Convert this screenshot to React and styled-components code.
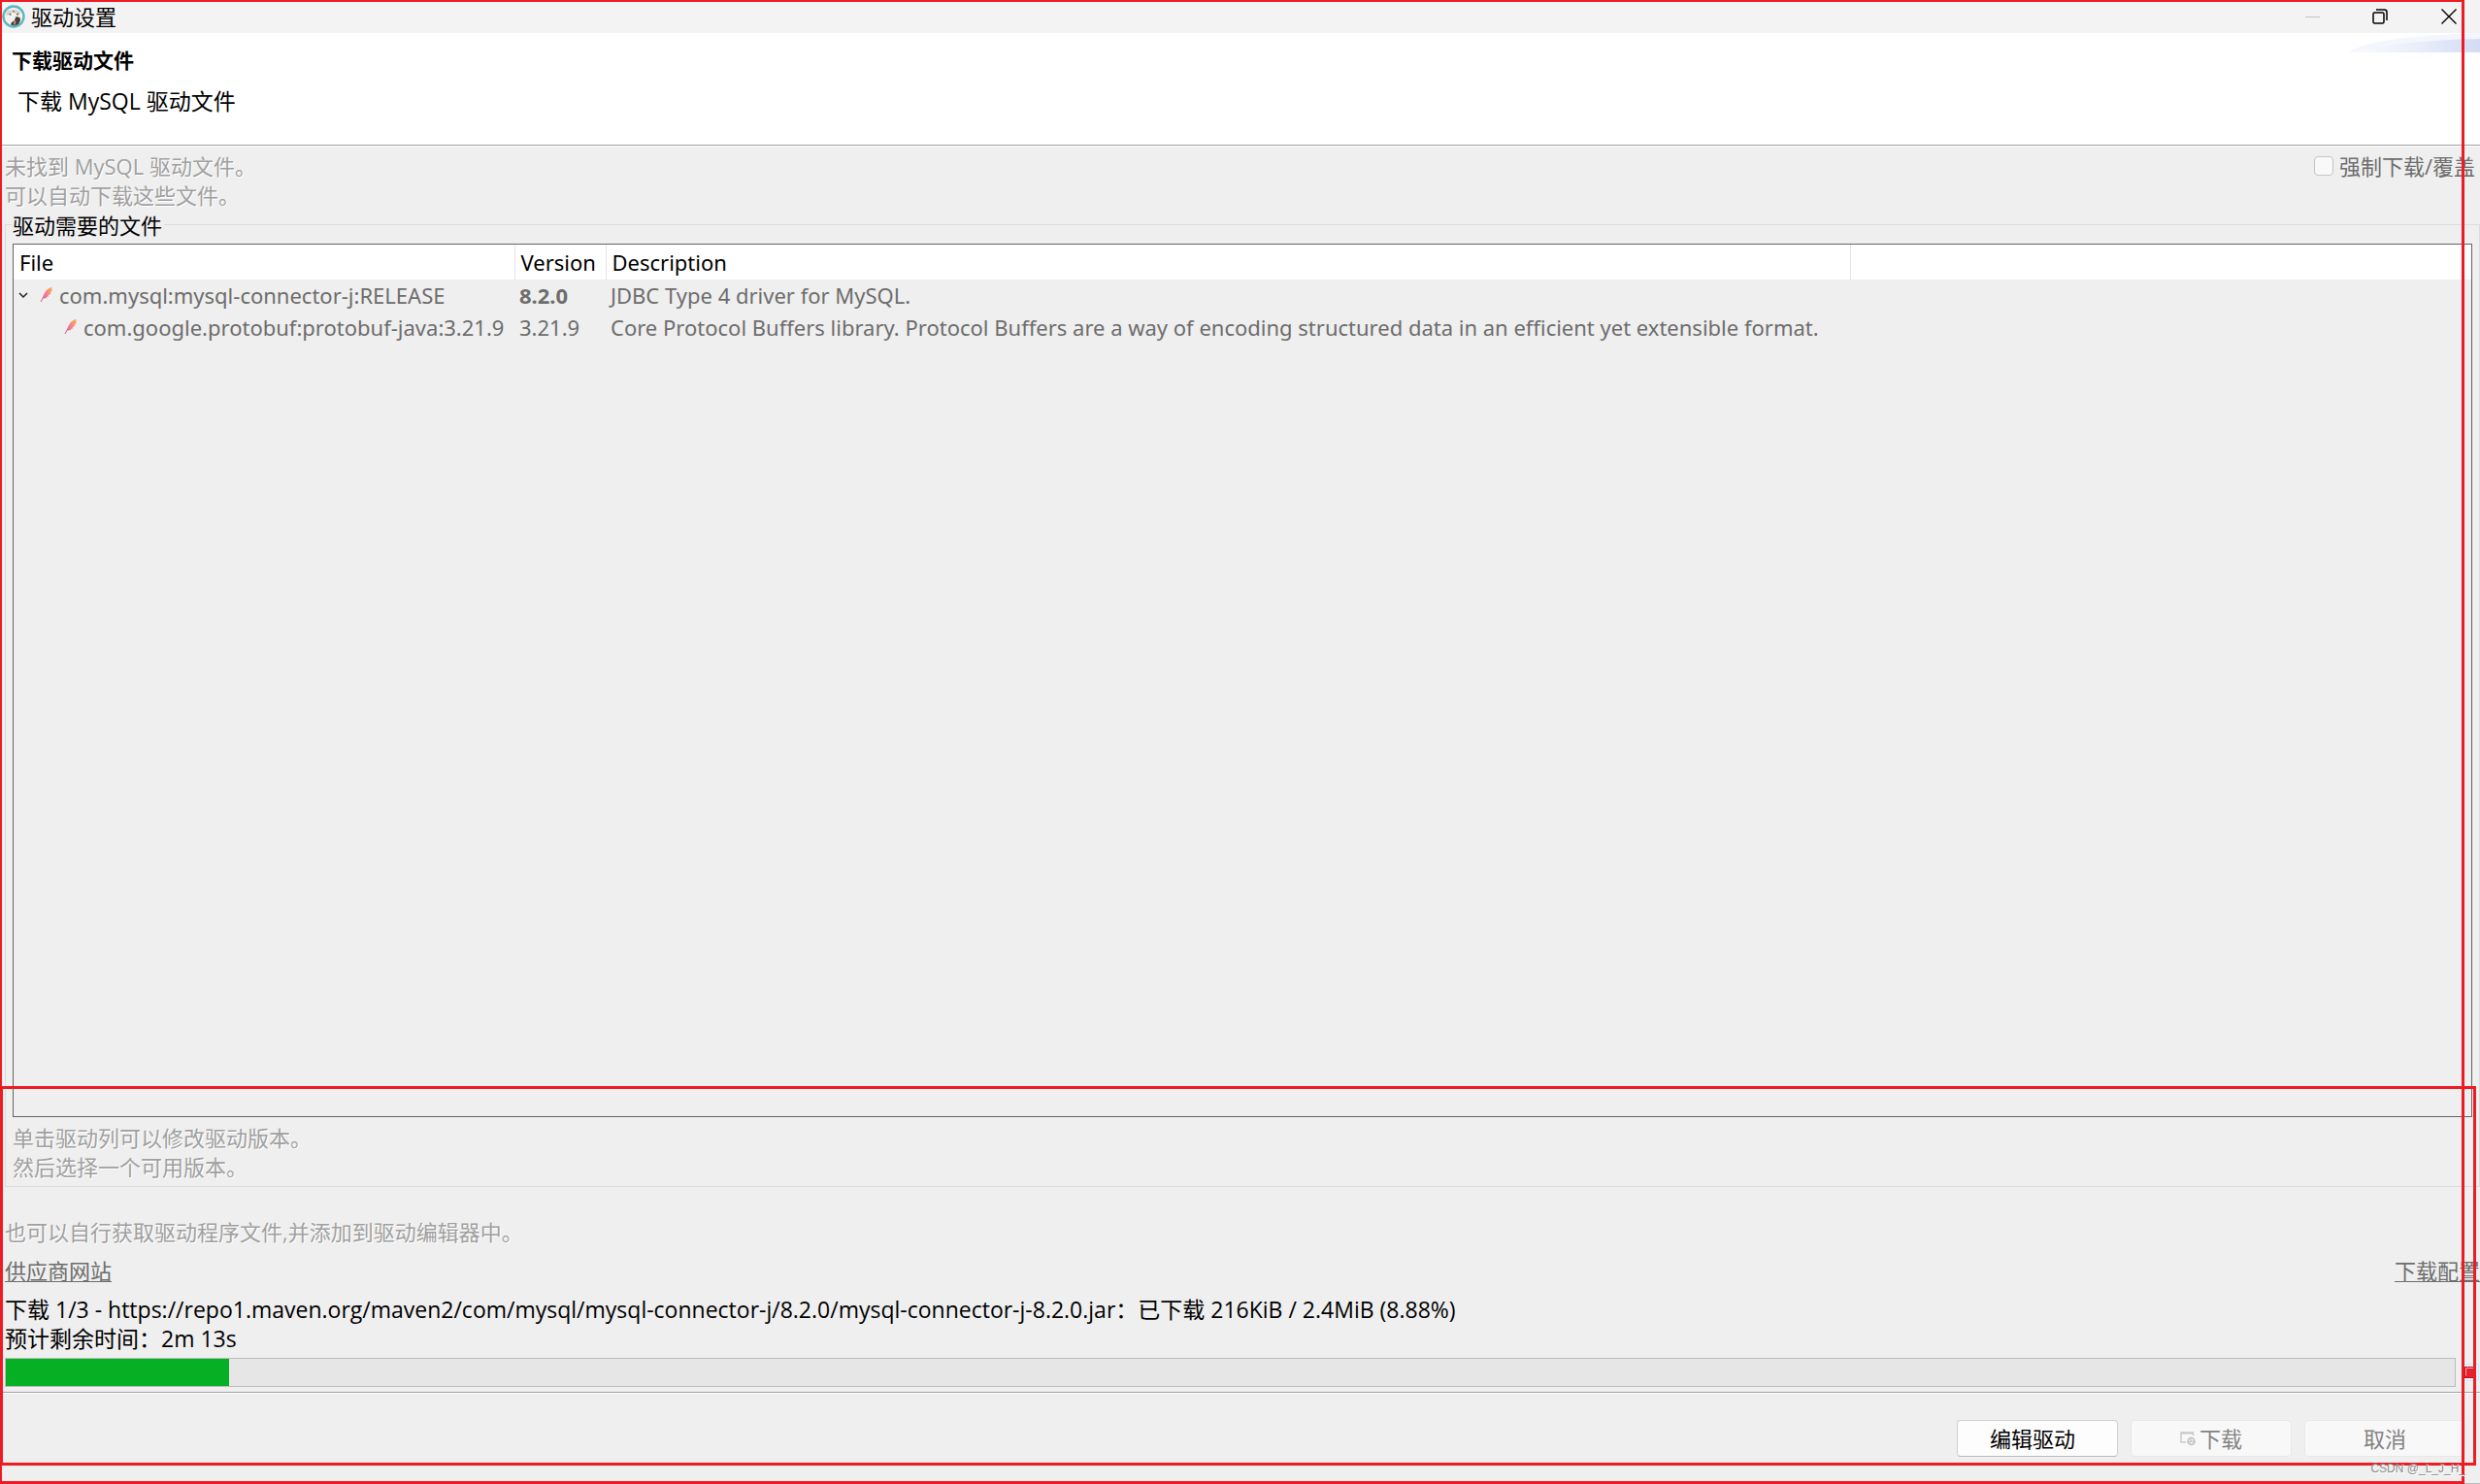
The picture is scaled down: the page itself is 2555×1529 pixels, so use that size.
import React from "react"
import styled, { createGlobalStyle } from "styled-components"

const GlobalStyle = createGlobalStyle`
  * {
    box-sizing: border-box;
  }
  body {
    margin: 0;
    background: #efefef;
    color: #000;
    font-family: "Open Sans", "Noto Sans CJK SC", sans-serif;
    font-size: 22px;
    line-height: 30px;
  }
  button, input {
    font: inherit;
  }
`

const Window = styled.div`
  position: relative;
  display: flex;
  flex-direction: column;
  min-height: 100vh;
  overflow: hidden;
`

const TitleBar = styled.header`
  display: flex;
  align-items: center;
  height: 34px;
  padding-left: 2px;
  background: #f3f3f3;
  h1 {
    margin: 0 0 0 6px;
    font-size: 22px;
    font-weight: 400;
  }
`

const WindowButtons = styled.div`
  display: flex;
  margin-left: auto;
`

const WindowButton = styled.button`
  display: flex;
  align-items: center;
  justify-content: center;
  width: 70px;
  height: 34px;
  padding: 0;
  border: 0;
  background: none;
  color: #000;
  &:disabled {
    color: #c4c4c4;
  }
  &:last-child {
    width: 68px;
    padding-left: 4px;
  }
`

const Banner = styled.section`
  display: flex;
  justify-content: space-between;
  height: 117px;
  background: #fff;
  box-shadow: inset 0 -1px #fff, inset 0 -2px #a0a0a0;
  h2 {
    margin: 13px 0 0 12px;
    font-size: 21px;
    font-weight: 700;
  }
  p {
    margin: 12px 0 0 18px;
    font-size: 23px;
  }
`

const Content = styled.main`
  display: flex;
  flex: 1;
  flex-direction: column;
  padding: 5px 0 5px 5px;
`

const Row = styled.div`
  display: flex;
  justify-content: space-between;
  align-items: flex-start;
`

const Note = styled.p`
  margin: 0;
  color: #a0a0a0;
  text-shadow: 1px 1px #fff;
`

const CheckLabel = styled.label`
  display: flex;
  align-items: center;
  gap: 6px;
  padding-right: 5px;
  color: #6d6d6d;
  input {
    appearance: none;
    width: 20px;
    height: 20px;
    margin: 0;
    border: 1px solid #c4c4c4;
    border-radius: 4px;
    background: #f9f9f9;
  }
`

const Group = styled.section`
  display: flex;
  flex: 1;
  flex-direction: column;
  margin-top: 15px;
  padding: 0 7px 5px;
  border: 1px solid #dcdcdc;
  h3 {
    align-self: flex-start;
    margin: -15px 0 4px -1px;
    padding: 0 2px 0 1px;
    background: #efefef;
    font-size: 22px;
    font-weight: 400;
  }
`

const TableBox = styled.div`
  flex: 1;
  margin-bottom: 6px;
  border: 1px solid #646464;
`

const Table = styled.table`
  width: 100%;
  table-layout: fixed;
  border-collapse: collapse;
  font-family: "Noto Sans", sans-serif;
  white-space: nowrap;
  th,
  td {
    padding: 0 6px;
    text-align: left;
    font-weight: 400;
  }
  th {
    height: 36px;
    background: #fff;
    border-right: 1px solid #e5e5e5;
  }
  th:last-child {
    border-right: 0;
  }
  td {
    height: 33px;
    padding: 0 5px 2px;
    color: #6d6d6d;
  }
`

const FileCell = styled.div`
  display: flex;
  align-items: center;
  gap: 5px;
  padding-left: ${props => (props.$child ? 46 : 0)}px;
  svg {
    flex: none;
  }
`

const VersionText = styled.span`
  font-weight: ${props => (props.$bold ? 700 : 400)};
`

const ManualNote = styled(Note)`
  margin: 31px 0 10px;
`

const TextLink = styled.a`
  color: #6d6d6d;
  text-decoration: underline;
  text-decoration-thickness: 1px;
  text-underline-offset: 2px;
`

const Status = styled.p`
  margin: 10px 0 5px;
  font-size: 23px;
`

const ProgressRow = styled.div`
  display: flex;
  align-items: center;
  gap: 6px;
`

const Progress = styled.progress`
  appearance: none;
  flex: 1;
  height: 30px;
  border: 1px solid #bcbcbc;
  background: #e6e6e6;
  &::-webkit-progress-bar {
    background: #e6e6e6;
  }
  &::-webkit-progress-value {
    background: #06b025;
  }
`

const StopButton = styled.button`
  display: flex;
  align-items: center;
  justify-content: center;
  width: 18px;
  height: 18px;
  margin-right: 1px;
  padding: 0;
  border: 1px solid #cce8ff;
  background: #e5f3ff;
`

const Footer = styled.footer`
  display: flex;
  justify-content: flex-end;
  gap: 13px;
  padding: 28px 15px 27px 0;
  border-top: 1px solid #a0a0a0;
  border-bottom: 1px solid #bcbcbc;
  box-shadow: inset 0 1px #fff;
`

const Button = styled.button`
  display: flex;
  align-items: center;
  justify-content: center;
  gap: 4px;
  width: 166px;
  height: 38px;
  padding: 0 10px 0 0;
  border: 1px solid #d0d0d0;
  border-bottom-color: #bababa;
  border-radius: 4px;
  background: #fdfdfd;
  color: #000;
  &:disabled {
    padding: 0;
    border-color: #e8e8e8;
    background: #f8f8f8;
    color: #838383;
  }
`

// red marker frames drawn over the window
const Marker = styled.div`
  position: absolute;
  pointer-events: none;
  border: 3px solid #ed1c24;
`

const WindowMarker = styled(Marker)`
  inset: 0 16px 0 0;
  border-top-width: 2px;
  border-left-width: 2px;
`

const ProgressMarker = styled(Marker)`
  right: 4px;
  bottom: 19px;
  left: 0;
  height: 391px;
`

const Watermark = styled.span`
  position: absolute;
  right: 15px;
  bottom: 6px;
  color: #8c8c8c;
  font-family: "Liberation Sans", sans-serif;
  font-size: 12px;
  line-height: 20px;
  text-shadow: 1px 1px #fff;
`

const BeaverIcon = () => (
  <svg width="24" height="24" viewBox="0 0 24 24">
    <circle cx="12" cy="12" r="10.5" fill="#f4f1ee" stroke="#57b9c0" strokeWidth="2.4" />
    <path d="M4 9c1-3 4-4 6-3.5l2-1 3 1 3 1 1 2-1 2-3-1-3-2-4 1-3 3z" fill="#d8d2cd" />
    <path d="M7 9.5l2-1 1 1.5-2 1zM11 6.5l2-.5v1.5h-2zM15 9l2-.5v2l-2 .3z" fill="#80746c" />
    <path d="M14.5 12l4 1 .5 3-2 4-4 1.5-4-1 1-2.5 2.5-1.5 1-2z" fill="#4a3a35" />
    <path d="M12.5 16l2 .5-.5 4h-2z" fill="#a8978d" />
  </svg>
)

const FeatherIcon = () => (
  <svg width="16" height="20" viewBox="0 0 16 20">
    <defs>
      <linearGradient id="feather" x1="1" y1="0" x2="0" y2="1">
        <stop offset="0" stopColor="#f9b04b" />
        <stop offset="0.45" stopColor="#f77f8c" />
        <stop offset="1" stopColor="#c75a9b" />
      </linearGradient>
    </defs>
    <path
      d="M13.5 2c-4 .5-7 4-8.5 8l-3.5 7h1l2-3.5 4-.5-1-1 3-.8-1-1 3-1.7-1-1 2-1.5z"
      fill="url(#feather)"
    />
  </svg>
)

const ChevronIcon = () => (
  <svg width="16" height="20" viewBox="0 0 16 20">
    <path d="M1 8l4 4 4-4" fill="none" stroke="#202020" strokeWidth="1.5" />
  </svg>
)

const DownloadIcon = () => (
  <svg width="16" height="16" viewBox="0 0 16 16" fill="none" stroke="#c8c8c8" strokeWidth="1.4">
    <path d="M13.5 5V2H1v10h5M1 2.8h12.5" />
    <circle cx="11.5" cy="11" r="3.4" fill="#f8f8f8" strokeWidth="2" />
    <path d="M10.5 8l1 3 3 .5M9 12l2.5-1" />
  </svg>
)

const Swoosh = () => (
  <svg width="135" height="20" viewBox="0 0 135 20">
    <defs>
      <linearGradient id="swoosh">
        <stop offset="0" stopColor="#fbfcfe" />
        <stop offset="0.55" stopColor="#e9edfa" />
        <stop offset="1" stopColor="#d3dcf5" />
      </linearGradient>
    </defs>
    <path d="M0 20C14 9 60 2 135 0v20z" fill="#f3f6fd" />
    <path d="M0 20C30 13 80 7 135 6v14z" fill="url(#swoosh)" />
  </svg>
)

const files = [
  {
    name: "com.mysql:mysql-connector-j:RELEASE",
    version: "8.2.0",
    description: "JDBC Type 4 driver for MySQL.",
  },
  {
    name: "com.google.protobuf:protobuf-java:3.21.9",
    version: "3.21.9",
    description:
      "Core Protocol Buffers library. Protocol Buffers are a way of encoding structured data in an efficient yet extensible format.",
    child: true,
  },
]

const FilesTable = () => (
  <Table>
    <colgroup>
      <col style={{ width: 516 }} />
      <col style={{ width: 94 }} />
      <col style={{ width: 1282 }} />
      <col />
    </colgroup>
    <thead>
      <tr>
        <th>File</th>
        <th>Version</th>
        <th>Description</th>
        <th aria-label="empty" />
      </tr>
    </thead>
    <tbody>
      {files.map(file => (
        <tr key={file.name}>
          <td>
            <FileCell $child={file.child}>
              {!file.child && <ChevronIcon />}
              <FeatherIcon />
              {file.name}
            </FileCell>
          </td>
          <td>
            <VersionText $bold={!file.child}>{file.version}</VersionText>
          </td>
          <td>{file.description}</td>
          <td />
        </tr>
      ))}
    </tbody>
  </Table>
)

const App = () => {
  return (
    <Window lang="zh-CN">
      <GlobalStyle />
      <TitleBar>
        <BeaverIcon />
        <h1>驱动设置</h1>
        <WindowButtons>
          <WindowButton type="button" aria-label="最小化" disabled>
            <svg width="15" height="15" stroke="currentColor">
              <path d="M0 7.5h15" />
            </svg>
          </WindowButton>
          <WindowButton type="button" aria-label="还原">
            <svg width="16" height="16" fill="none" stroke="currentColor" strokeWidth="1.5">
              <rect x="1" y="4" width="11" height="11" rx="1.5" />
              <path d="M4 1h8.5q2.5 0 2.5 2.5V12" />
            </svg>
          </WindowButton>
          <WindowButton type="button" aria-label="关闭">
            <svg width="16" height="16" stroke="currentColor" strokeWidth="1.4">
              <path d="M.5.5l15 15M15.5.5l-15 15" />
            </svg>
          </WindowButton>
        </WindowButtons>
      </TitleBar>
      <Banner>
        <div>
          <h2>下载驱动文件</h2>
          <p>下载 MySQL 驱动文件</p>
        </div>
        <Swoosh />
      </Banner>
      <Content>
        <Row>
          <Note>
            未找到 MySQL 驱动文件。
            <br />
            可以自动下载这些文件。
          </Note>
          <CheckLabel>
            <input type="checkbox" disabled />
            强制下载/覆盖
          </CheckLabel>
        </Row>
        <Group>
          <h3>驱动需要的文件</h3>
          <TableBox>
            <FilesTable />
          </TableBox>
          <Note>
            单击驱动列可以修改驱动版本。
            <br />
            然后选择一个可用版本。
          </Note>
        </Group>
        <ManualNote>也可以自行获取驱动程序文件,并添加到驱动编辑器中。</ManualNote>
        <Row>
          <TextLink href="#vendor">供应商网站</TextLink>
          <TextLink href="#config">下载配置</TextLink>
        </Row>
        <Status>
          下载 1/3 - https://repo1.maven.org/maven2/com/mysql/mysql-connector-j/8.2.0/mysql-connector-j-8.2.0.jar：已下载
          216KiB / 2.4MiB (8.88%)
          <br />
          预计剩余时间：2m 13s
        </Status>
        <ProgressRow>
          <Progress aria-label="下载进度" max="1000" value="91" />
          <StopButton type="button" aria-label="停止">
            <svg width="12" height="12">
              <rect x=".5" y=".5" width="11" height="11" fill="#e3242f" stroke="#c0141e" />
              <path d="M1.5 9.5v-8h8" fill="none" stroke="#f5a3a6" />
            </svg>
          </StopButton>
        </ProgressRow>
      </Content>
      <Footer>
        <Button type="button">编辑驱动</Button>
        <Button type="button" disabled>
          <DownloadIcon />
          下载
        </Button>
        <Button type="button" disabled>
          取消
        </Button>
      </Footer>
      <WindowMarker />
      <ProgressMarker />
      <Watermark>CSDN @_L_J_H_</Watermark>
    </Window>
  )
}

export default App
